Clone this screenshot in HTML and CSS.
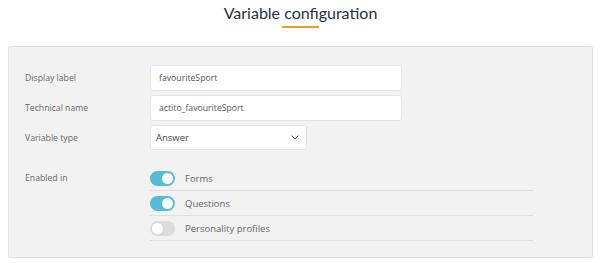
FILE: index.html
```html
<!DOCTYPE html>
<html lang="en">
<head>
    <meta charset="UTF-8">
    <meta name="viewport" content="width=device-width, initial-scale=1.0">
    <title>Variable configuration</title>
    <link rel="stylesheet" href="styles.css">
</head>
<body>
    <div class="header">
        <h1>Variable configuration</h1>
        <div class="underline"></div>
    </div>

    <div class="panel">
        <div class="field">
            <label>Display label</label>
            <div class="input">favouriteSport</div>
        </div>
        <div class="field">
            <label>Technical name</label>
            <div class="input">actito_favouriteSport</div>
        </div>
        <div class="field">
            <label>Variable type</label>
            <div class="select">
                <span>Answer</span>
                <svg width="8" height="5" viewBox="0 0 8 5"><path d="M0.5 0.5 L4 4 L7.5 0.5" fill="none" stroke="#777" stroke-width="1"/></svg>
            </div>
        </div>

        <div class="field enabled">
            <label>Enabled in</label>
            <div class="toggles">
                <div class="toggle-row">
                    <span class="toggle on"></span>
                    <span>Forms</span>
                </div>
                <div class="toggle-row">
                    <span class="toggle on"></span>
                    <span>Questions</span>
                </div>
                <div class="toggle-row">
                    <span class="toggle"></span>
                    <span>Personality profiles</span>
                </div>
            </div>
        </div>
    </div>
</body>
</html>
```

FILE: styles.css
```css
body {
    margin: 0 8px;
    font-family: "Open Sans", sans-serif;
    font-size: 8.7px;
    color: #666;
    background: white;
}
.header {
    display: flex;
    flex-direction: column;
    align-items: center;
    padding-top: 3px;
    height: 46px;
    box-sizing: border-box;
}
h1 {
    margin: 0;
    font-family: Lato, sans-serif;
    font-weight: 400;
    font-size: 16px;
    line-height: 20px;
    color: #1f3244;
}
.underline {
    width: 37px;
    height: 2px;
    background: #f39a25;
    margin-top: 3px;
}
.panel {
    background: #f2f2f2;
    border: 1px solid #e2e2e2;
    border-radius: 2px;
    padding: 18px 0 16px 16px;
}
.field {
    display: flex;
    align-items: center;
    margin-bottom: 4px;
}
.field label {
    width: 125px;
    flex-shrink: 0;
}
.input {
    width: 252px;
    height: 26px;
    box-sizing: border-box;
    background: white;
    border: 1px solid #e4e4e4;
    border-radius: 3px;
    padding: 0 8px;
    display: flex;
    align-items: center;
    color: #555;
}
.select {
    width: 157px;
    height: 25px;
    box-sizing: border-box;
    background: white;
    border: 1px solid #e4e4e4;
    border-radius: 3px;
    padding: 0 7px 0 5px;
    display: flex;
    align-items: center;
    justify-content: space-between;
    color: #444;
    font-size: 9.5px;
}
.enabled {
    align-items: flex-start;
    margin-top: 16px;
    margin-bottom: 0;
}
.enabled label {
    line-height: 24px;
}
.toggles {
    width: 383px;
}
.toggle-row {
    display: flex;
    align-items: center;
    height: 24px;
    border-bottom: 1px solid #dedede;
    font-size: 9.5px;
}
.toggle {
    width: 25px;
    height: 15px;
    border-radius: 8px;
    background: #dcdcdc;
    position: relative;
    margin-right: 10px;
}
.toggle::after {
    content: "";
    position: absolute;
    top: 2px;
    left: 2px;
    width: 11px;
    height: 11px;
    border-radius: 50%;
    background: white;
}
.toggle.on {
    background: #55bcd8;
}
.toggle.on::after {
    left: 12px;
}
```
